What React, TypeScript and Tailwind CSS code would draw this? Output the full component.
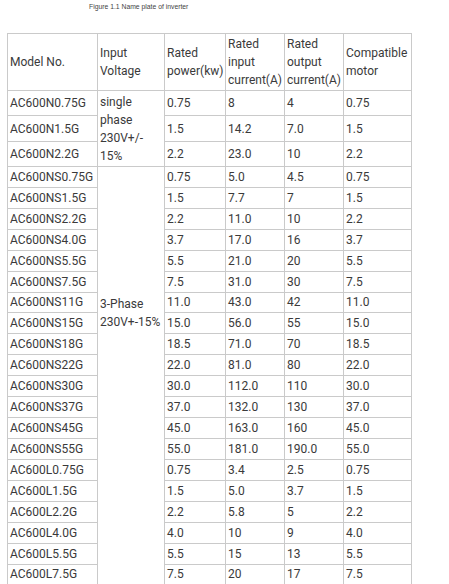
import type { ReactNode } from 'react';

interface Row {
  model: string;
  power: string;
  input: string;
  output: string;
  motor: string;
}

const single: Row[] = [
  { model: 'AC600N0.75G', power: '0.75', input: '8', output: '4', motor: '0.75' },
  { model: 'AC600N1.5G', power: '1.5', input: '14.2', output: '7.0', motor: '1.5' },
  { model: 'AC600N2.2G', power: '2.2', input: '23.0', output: '10', motor: '2.2' },
];

const threePhase: Row[] = [
  { model: 'AC600NS0.75G', power: '0.75', input: '5.0', output: '4.5', motor: '0.75' },
  { model: 'AC600NS1.5G', power: '1.5', input: '7.7', output: '7', motor: '1.5' },
  { model: 'AC600NS2.2G', power: '2.2', input: '11.0', output: '10', motor: '2.2' },
  { model: 'AC600NS4.0G', power: '3.7', input: '17.0', output: '16', motor: '3.7' },
  { model: 'AC600NS5.5G', power: '5.5', input: '21.0', output: '20', motor: '5.5' },
  { model: 'AC600NS7.5G', power: '7.5', input: '31.0', output: '30', motor: '7.5' },
  { model: 'AC600NS11G', power: '11.0', input: '43.0', output: '42', motor: '11.0' },
  { model: 'AC600NS15G', power: '15.0', input: '56.0', output: '55', motor: '15.0' },
  { model: 'AC600NS18G', power: '18.5', input: '71.0', output: '70', motor: '18.5' },
  { model: 'AC600NS22G', power: '22.0', input: '81.0', output: '80', motor: '22.0' },
  { model: 'AC600NS30G', power: '30.0', input: '112.0', output: '110', motor: '30.0' },
  { model: 'AC600NS37G', power: '37.0', input: '132.0', output: '130', motor: '37.0' },
  { model: 'AC600NS45G', power: '45.0', input: '163.0', output: '160', motor: '45.0' },
  { model: 'AC600NS55G', power: '55.0', input: '181.0', output: '190.0', motor: '55.0' },
];

const lSeries: Row[] = [
  { model: 'AC600L0.75G', power: '0.75', input: '3.4', output: '2.5', motor: '0.75' },
  { model: 'AC600L1.5G', power: '1.5', input: '5.0', output: '3.7', motor: '1.5' },
  { model: 'AC600L2.2G', power: '2.2', input: '5.8', output: '5', motor: '2.2' },
  { model: 'AC600L4.0G', power: '4.0', input: '10', output: '9', motor: '4.0' },
  { model: 'AC600L5.5G', power: '5.5', input: '15', output: '13', motor: '5.5' },
  { model: 'AC600L7.5G', power: '7.5', input: '20', output: '17', motor: '7.5' },
];

const cell = 'border border-[#cacaca] pl-[2px] pr-0 py-0 align-middle whitespace-nowrap';

function Td({ children, className = '', rowSpan }: { children?: ReactNode; className?: string; rowSpan?: number }) {
  return (
    <td rowSpan={rowSpan} className={`${cell} ${className}`}>
      {children}
    </td>
  );
}

function Values({ row }: { row: Row }) {
  return (
    <>
      <Td>{row.power}</Td>
      <Td>{row.input}</Td>
      <Td>{row.output}</Td>
      <Td>{row.motor}</Td>
    </>
  );
}

export default function App() {
  const rowH = 'h-[20.93px]';
  const firstH = ['h-[25px]', 'h-[26px]', 'h-[25px]'];

  return (
    <div className="w-[449px] h-[584px] overflow-hidden bg-white text-[#3a3a3a] font-['Roboto','Liberation_Sans',sans-serif]">
      {/* 图题 */}
      <div className="pt-[3px] pl-[89px] h-[33px] text-[6.8px] leading-[8px] text-[#444] font-['Liberation_Sans','Arial',sans-serif]">
        Figure 1.1 Name plate of inverter
      </div>

      <table className="ml-[7px] table-fixed border-collapse text-[12px] leading-[18px]">
        <colgroup>
          <col className="w-[90px]" />
          <col className="w-[67px]" />
          <col className="w-[61px]" />
          <col className="w-[59px]" />
          <col className="w-[59px]" />
          <col className="w-[68px]" />
        </colgroup>
        <tbody>
          <tr className="h-[57px]">
            <Td>Model No.</Td>
            <Td>Input<br />Voltage</Td>
            <Td>Rated<br />power(kw)</Td>
            <Td>Rated<br />input<br />current(A)</Td>
            <Td>Rated<br />output<br />current(A)</Td>
            <Td>Compatible<br />motor</Td>
          </tr>

          {single.map((row, i) => (
            <tr key={row.model} className={firstH[i]}>
              <Td>{row.model}</Td>
              {i === 0 && (
                <Td rowSpan={3}>single<br />phase<br />230V+/-<br />15%</Td>
              )}
              <Values row={row} />
            </tr>
          ))}

          {threePhase.map((row, i) => (
            <tr key={row.model} className={rowH}>
              <Td>{row.model}</Td>
              {i === 0 && (
                <Td rowSpan={14} className="border-b-0">3-Phase<br />230V+-15%</Td>
              )}
              <Values row={row} />
            </tr>
          ))}

          {lSeries.map((row, i) => (
            <tr key={row.model} className={rowH}>
              <Td>{row.model}</Td>
              {i === 0 && <Td rowSpan={6} className="border-t-0" />}
              <Values row={row} />
            </tr>
          ))}
        </tbody>
      </table>
    </div>
  );
}
